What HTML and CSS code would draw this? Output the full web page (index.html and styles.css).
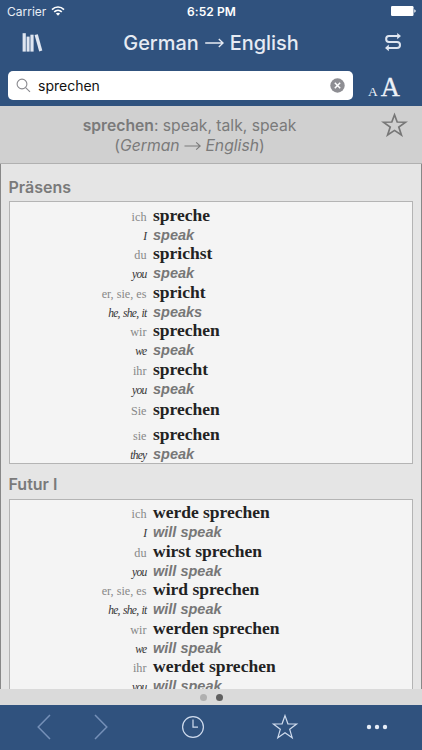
FILE: index.html
```html
<!DOCTYPE html>
<html lang="en">
<head>
    <meta charset="UTF-8">
    <meta name="viewport" content="width=device-width, initial-scale=1.0">
    <title>German - English</title>
    <link rel="stylesheet" href="styles.css">
</head>
<body>
    <header class="header">
        <div class="status">
            <div class="carrier">
                <span class="carrier-name">Carrier</span>
                <svg width="14" height="10" viewBox="0 0 14 10" fill="none" stroke="#fff" stroke-width="1.6">
                    <path d="M1 3.6 C4.4 0.2 9.6 0.2 13 3.6"/>
                    <path d="M3.2 5.9 C5.4 3.8 8.6 3.8 10.8 5.9"/>
                    <path d="M7 9.7 L4.9 7.6 C6.1 6.5 7.9 6.5 9.1 7.6 Z" fill="#fff" stroke="none"/>
                </svg>
            </div>
            <span class="time">6:52 PM</span>
            <div class="battery">
                <svg width="25" height="10" viewBox="0 0 25 10" fill="#fff">
                    <rect x="0" y="0" width="22.5" height="10" rx="1.2"/>
                    <path d="M23.3 3.2 Q24.7 3.8 24.7 5 Q24.7 6.2 23.3 6.8 Z"/>
                </svg>
            </div>
        </div>
        <div class="navbar">
            <svg class="books" width="22" height="20" viewBox="0 0 22 20" fill="#dfe6f1">
                <rect x="0.6" y="0.2" width="3.2" height="18.4"/>
                <rect x="4.6" y="3.6" width="3" height="15"/>
                <rect x="8.4" y="1.7" width="3.2" height="16.9"/>
                <path d="M12.6 2 L15.8 1.3 L20.3 17.5 L17.2 18.4 Z"/>
            </svg>
            <h1 class="title">
                <span class="from">German</span>
                <svg width="19" height="12" viewBox="0 0 19 12" fill="none" stroke="#e6ebf3" stroke-width="1.4">
                    <path d="M0.2 6 H18 M13.8 2 L18.1 6 L13.8 10"/>
                </svg>
                <span class="to">English</span>
            </h1>
            <svg class="swap" width="18" height="20" viewBox="0 0 18 20" fill="none" stroke="#dfe6f1" stroke-width="2">
                <path d="M14 3 H5 C1.2 3 1.2 8.9 5 8.9 H13 C17 8.9 17 14.9 13 14.9 H4"/>
                <path d="M13.2 0 L17 3 L13.2 6.3 Z M4.8 11.6 L1 14.9 L4.8 18.2 Z" fill="#dfe6f1" stroke="none"/>
            </svg>
        </div>
        <div class="search-row">
            <div class="search">
                <svg class="magnifier" width="15" height="15" viewBox="0 0 15 15" fill="none" stroke="#8a8a8f" stroke-width="1.1">
                    <circle cx="6" cy="6" r="4.9"/>
                    <path d="M9.6 9.6 L14 13.8"/>
                </svg>
                <span class="query">sprechen</span>
                <svg class="clear" width="15" height="15" viewBox="0 0 15 15">
                    <circle cx="7.5" cy="7.5" r="7.2" fill="#8e8e93"/>
                    <path d="M4.8 4.8 L10.2 10.2 M10.2 4.8 L4.8 10.2" stroke="#fff" stroke-width="1.5"/>
                </svg>
            </div>
            <div class="font-size"><span class="small-a">A</span><span class="big-a">A</span></div>
        </div>
    </header>

    <section class="summary">
        <p class="meaning"><b>sprechen</b>: speak, talk, speak</p>
        <p class="direction">(<i>German</i>
            <svg width="17" height="10" viewBox="0 0 17 10" fill="none" stroke="#7a7a7a" stroke-width="1.1"><path d="M0.5 5 H16 M12.2 1.3 L16.2 5 L12.2 8.7"/></svg>
            <i>English</i>)</p>
        <svg class="favorite" width="27" height="25" viewBox="0 0 27 25" fill="none" stroke="#777" stroke-width="1.7">
            <path d="M13.5 2.8 L16.2 10 L24.6 10.2 L17.8 15.1 L20.4 23 L13.5 18.4 L6.6 23 L9.2 15.1 L2.4 10.2 L10.8 10 Z"/>
        </svg>
    </section>

    <main class="content">
        <h2 class="tense">Präsens</h2>
        <div class="table">
            <div class="de"><span>ich</span><b>spreche</b></div>
            <div class="en"><span>I</span><b>speak</b></div>
            <div class="de"><span>du</span><b>sprichst</b></div>
            <div class="en"><span>you</span><b>speak</b></div>
            <div class="de"><span>er, sie, es</span><b>spricht</b></div>
            <div class="en"><span>he, she, it</span><b>speaks</b></div>
            <div class="de"><span>wir</span><b>sprechen</b></div>
            <div class="en"><span>we</span><b>speak</b></div>
            <div class="de"><span>ihr</span><b>sprecht</b></div>
            <div class="en"><span>you</span><b>speak</b></div>
            <div class="de formal"><span>Sie</span><b>sprechen</b></div>
            <div class="de"><span>sie</span><b>sprechen</b></div>
            <div class="en"><span>they</span><b>speak</b></div>
        </div>
        <h2 class="tense">Futur I</h2>
        <div class="table">
            <div class="de"><span>ich</span><b>werde sprechen</b></div>
            <div class="en"><span>I</span><b>will speak</b></div>
            <div class="de"><span>du</span><b>wirst sprechen</b></div>
            <div class="en"><span>you</span><b>will speak</b></div>
            <div class="de"><span>er, sie, es</span><b>wird sprechen</b></div>
            <div class="en"><span>he, she, it</span><b>will speak</b></div>
            <div class="de"><span>wir</span><b>werden sprechen</b></div>
            <div class="en"><span>we</span><b>will speak</b></div>
            <div class="de"><span>ihr</span><b>werdet sprechen</b></div>
            <div class="en"><span>you</span><b>will speak</b></div>
        </div>
    </main>

    <div class="pages">
        <span class="dot"></span>
        <span class="dot active"></span>
    </div>

    <nav class="toolbar">
        <svg class="faded" width="14" height="26" viewBox="0 0 14 26"><path d="M13 1 L1.2 13 L13 25"/></svg>
        <svg class="faded" width="14" height="26" viewBox="0 0 14 26"><path d="M1 1 L12.8 13 L1 25"/></svg>
        <svg width="24" height="24" viewBox="0 0 24 24"><circle cx="12" cy="12" r="10.4"/><path d="M12 4.5 V12.2 H17"/></svg>
        <svg width="28" height="26" viewBox="0 0 28 26"><path d="M14 1.6 L16.9 9.8 L25.6 10 L18.7 15.3 L21.2 23.8 L14 18.8 L6.8 23.8 L9.3 15.3 L2.4 10 L11.1 9.8 Z"/></svg>
        <svg class="more" width="22" height="6" viewBox="0 0 22 6"><circle cx="3" cy="3" r="2.2"/><circle cx="11" cy="3" r="2.2"/><circle cx="19" cy="3" r="2.2"/></svg>
    </nav>
</body>
</html>
```
FILE: styles.css
```css
* {
    box-sizing: border-box;
    margin: 0;
    padding: 0;
}

body {
    width: 422px;
    height: 750px;
    display: flex;
    flex-direction: column;
    overflow: hidden;
    font-family: Inter, "Liberation Sans", sans-serif;
    background-color: #e5e5e5;
}

svg {
    display: block;
    flex: none;
}

.header {
    height: 106px;
    flex: none;
    background-color: #30527e;
    color: #fff;
}

.status {
    display: grid;
    grid-template-columns: 1fr auto 1fr;
    align-items: center;
    height: 22px;
    padding: 0 6px 0 7px;
    font-size: 12px;
}

.carrier {
    display: flex;
    align-items: center;
    gap: 5px;
}

.carrier-name {
    color: #e9eef5;
}

.time {
    font-weight: 600;
    letter-spacing: 0.1px;
}

.battery {
    display: flex;
    justify-content: flex-end;
}

.navbar {
    display: grid;
    grid-template-columns: 22px 1fr 18px;
    align-items: center;
    height: 42px;
    padding: 0 20px 0 22px;
}

.title {
    display: flex;
    align-items: center;
    justify-content: center;
    gap: 6px;
    padding-right: 6px;
    font-size: 19.9px;
    font-weight: 500;
    color: #e6ebf3;
}

.search-row {
    display: flex;
    align-items: center;
    padding: 7px 22px 0 8px;
}

.search {
    display: flex;
    align-items: center;
    width: 345px;
    height: 29px;
    padding: 0 8px;
    border-radius: 5px;
    background-color: #fff;
}

.query {
    flex: 1;
    margin-left: 7px;
    font-size: 14px;
    color: #111;
}

.font-size {
    flex: 1;
    display: flex;
    align-items: baseline;
    justify-content: flex-end;
    gap: 3px;
    padding-top: 3px;
    font-family: "Liberation Serif", serif;
    color: #eef2f8;
}

.small-a {
    font-size: 13.5px;
}

.big-a {
    font-size: 26.5px;
    line-height: 26px;
    -webkit-text-stroke: 0.3px #eef2f8;
}

.summary {
    position: relative;
    height: 58px;
    flex: none;
    padding: 10px 43px 0 0;
    border-bottom: 1px solid #b0b0b0;
    background-color: #d0d0d0;
    color: #7a7a7a;
    font-size: 15.7px;
    line-height: 20px;
    text-align: center;
}

.summary b {
    font-weight: 600;
}

.direction svg {
    display: inline-block;
}

.favorite {
    position: absolute;
    top: 6px;
    right: 14px;
}

.content {
    flex: 1;
    min-height: 0;
    overflow: hidden;
    padding: 0 8px 0 7.5px;
    border-left: 1px solid #888;
    border-right: 1px solid #888;
}

.tense {
    height: 37px;
    padding-top: 13px;
    font-size: 16px;
    font-weight: 600;
    line-height: 20px;
    color: #7a7a7a;
}

.table {
    padding-top: 2.5px;
    border: 1px solid #b4b4b4;
    background-color: #f4f4f4;
}

.table + .tense {
    height: 35px;
    padding-top: 10px;
}

.table + .tense + .table {
    padding-top: 2px;
}

.de, .en {
    display: grid;
    grid-template-columns: 137px 1fr;
    column-gap: 6.5px;
    align-items: baseline;
    white-space: nowrap;
}

.de span, .en span {
    text-align: right;
}

.de {
    height: 20px;
    font-family: "Liberation Serif", serif;
    font-size: 17.5px;
    line-height: 20px;
    color: #222;
}

.de span {
    font-size: 12.2px;
    color: #888;
}

.en {
    height: 18.6px;
    font-family: "Liberation Sans", sans-serif;
    font-size: 14.5px;
    font-style: italic;
    line-height: 20px;
    color: #777;
}

.en span {
    font-family: "Liberation Serif", serif;
    font-size: 11.5px;
    letter-spacing: -0.7px;
    word-spacing: 1px;
    color: #333;
}

.formal {
    height: 27px;
    padding-top: 2px;
}

.pages {
    display: flex;
    align-items: center;
    justify-content: center;
    gap: 9px;
    height: 16px;
    flex: none;
    background-color: #dadada;
}

.dot {
    width: 7px;
    height: 7px;
    border-radius: 50%;
    background-color: #b0b0b0;
}

.dot.active {
    background-color: #606060;
}

.toolbar {
    display: grid;
    grid-template-columns: 50px 64px 119px 65px 119px;
    align-items: center;
    justify-content: start;
    justify-items: center;
    height: 45px;
    flex: none;
    padding: 0 0 1px 19px;
    background-color: #30527e;
}

.toolbar svg {
    fill: none;
    stroke: #d0dcee;
    stroke-width: 1.2;
}

.toolbar .faded {
    stroke: #7590b8;
    stroke-width: 1.5;
}

.toolbar .more {
    fill: #e6edf7;
    stroke: none;
}
```
